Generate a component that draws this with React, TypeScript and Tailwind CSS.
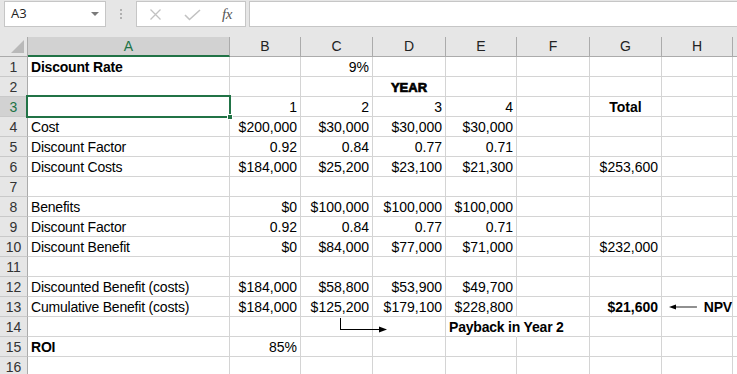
import React from "react";

type Cell = { t?: string; a?: "l" | "r" | "c"; b?: boolean; heavy?: boolean; special?: "npv" | "payArrow" | "payText" };
type ColKey = "A" | "B" | "C" | "D" | "E" | "F" | "G" | "H";

const COLS: ColKey[] = ["A", "B", "C", "D", "E", "F", "G", "H"];

const data: Record<number, Partial<Record<ColKey, Cell>>> = {
  1: { A: { t: "Discount Rate", b: true }, C: { t: "9%", a: "r" } },
  2: { D: { t: "YEAR", a: "c", heavy: true } },
  3: { B: { t: "1", a: "r" }, C: { t: "2", a: "r" }, D: { t: "3", a: "r" }, E: { t: "4", a: "r" }, G: { t: "Total", a: "c", b: true } },
  4: { A: { t: "Cost" }, B: { t: "$200,000", a: "r" }, C: { t: "$30,000", a: "r" }, D: { t: "$30,000", a: "r" }, E: { t: "$30,000", a: "r" } },
  5: { A: { t: "Discount Factor" }, B: { t: "0.92", a: "r" }, C: { t: "0.84", a: "r" }, D: { t: "0.77", a: "r" }, E: { t: "0.71", a: "r" } },
  6: { A: { t: "Discount Costs" }, B: { t: "$184,000", a: "r" }, C: { t: "$25,200", a: "r" }, D: { t: "$23,100", a: "r" }, E: { t: "$21,300", a: "r" }, G: { t: "$253,600", a: "r" } },
  7: {},
  8: { A: { t: "Benefits" }, B: { t: "$0", a: "r" }, C: { t: "$100,000", a: "r" }, D: { t: "$100,000", a: "r" }, E: { t: "$100,000", a: "r" } },
  9: { A: { t: "Discount Factor" }, B: { t: "0.92", a: "r" }, C: { t: "0.84", a: "r" }, D: { t: "0.77", a: "r" }, E: { t: "0.71", a: "r" } },
  10: { A: { t: "Discount Benefit" }, B: { t: "$0", a: "r" }, C: { t: "$84,000", a: "r" }, D: { t: "$77,000", a: "r" }, E: { t: "$71,000", a: "r" }, G: { t: "$232,000", a: "r" } },
  11: {},
  12: { A: { t: "Discounted Benefit (costs)" }, B: { t: "$184,000", a: "r" }, C: { t: "$58,800", a: "r" }, D: { t: "$53,900", a: "r" }, E: { t: "$49,700", a: "r" } },
  13: { A: { t: "Cumulative Benefit (costs)" }, B: { t: "$184,000", a: "r" }, C: { t: "$125,200", a: "r" }, D: { t: "$179,100", a: "r" }, E: { t: "$228,800", a: "r" }, G: { t: "$21,600", a: "r", b: true }, H: { special: "npv" } },
  14: { C: { special: "payArrow" }, E: { t: "Payback in Year 2", b: true, special: "payText" } },
  15: { A: { t: "ROI", b: true }, B: { t: "85%", a: "r" } },
  16: {},
};

const gridCols = "grid grid-cols-[28px_202px_71px_72px_73px_71px_73px_72px_71px_1fr]";

function DataCell({ cell, row, col }: { cell?: Cell; row: number; col: ColKey }) {
  const a = cell?.a ?? "l";
  const align =
    a === "r" ? "justify-end pr-[3px]" : a === "c" ? "justify-center" : "justify-start pl-[3px] tracking-[-0.2px]";
  const weight = cell?.b ? "font-bold" : "";
  const isSel = row === 3 && col === "A";
  const raise = cell?.special === "payArrow" || cell?.special === "payText" || isSel ? "z-10" : "";
  const borderR = cell?.special === "payText" ? "border-r-white" : "border-r-[#d4d4d4]";
  return (
    <div
      className={`relative h-[20px] pt-[2px] border-r border-b border-b-[#d4d4d4] ${borderR} bg-white flex items-center whitespace-nowrap text-[14px] text-black ${align} ${weight} ${raise}`}
    >
      {cell?.heavy ? (
        <span className="font-bold text-[13px] [-webkit-text-stroke:0.7px_black]">{cell.t}</span>
      ) : cell?.special === "npv" ? (
        <div className="flex items-center pl-[4px] w-full">
          <svg width="33" height="8" viewBox="0 0 33 8" className="-mt-[1px]">
            <polygon points="0,4 8,1 8,7" fill="#000" />
            <line x1="7" y1="4" x2="32" y2="4" stroke="#000" strokeWidth="1" />
          </svg>
          <span className="ml-[6px] font-bold">NPV</span>
        </div>
      ) : cell?.special === "payArrow" ? (
        <svg className="absolute left-[38px] top-[0px]" width="50" height="17" viewBox="0 0 50 17">
          <line x1="1.5" y1="1" x2="1.5" y2="12.5" stroke="#000" strokeWidth="1" />
          <line x1="1" y1="12.5" x2="42" y2="12.5" stroke="#000" strokeWidth="1" />
          <polygon points="40,9.5 48,12.5 40,15.5" fill="#000" />
        </svg>
      ) : (
        cell?.t
      )}
      {isSel && (
        <>
          <div className="absolute left-[-2px] top-[-2px] right-[-2px] bottom-[-2px] border-2 border-[#217346] pointer-events-none" />
          <div className="absolute right-[-4px] bottom-[-4px] w-[6px] h-[6px] bg-[#217346] border border-white" />
        </>
      )}
    </div>
  );
}

export default function App() {
  return (
    <div className="w-[737px] h-[374px] overflow-hidden bg-[#e6e6e6] font-['Liberation_Sans',Arial,sans-serif] select-none">
      {/* Formula bar */}
      <div className="flex h-[27px] pt-[1px]">
        <div className="ml-[4px] w-[102px] h-[26px] bg-white border border-[#c6c6c6] flex items-center justify-between pl-[6px] pr-[6px]">
          <span className="text-[13px] text-[#222] font-['Open_Sans','Liberation_Sans',sans-serif]">A3</span>
          <svg width="8" height="5" viewBox="0 0 8 5">
            <polygon points="0,0 8,0 4,4" fill="#7a7a7a" />
          </svg>
        </div>
        <div className="w-[30px] flex flex-col items-center justify-center gap-[2px]">
          <span className="w-[2px] h-[2px] bg-[#b0b0b0]" />
          <span className="w-[2px] h-[2px] bg-[#b0b0b0]" />
          <span className="w-[2px] h-[2px] bg-[#b0b0b0]" />
        </div>
        <div className="w-[110px] h-[26px] bg-white border border-[#c6c6c6] flex items-center">
          <svg className="ml-[12px]" width="13" height="13" viewBox="0 0 13 13">
            <path d="M1.5 1.5 L11.5 11.5 M11.5 1.5 L1.5 11.5" stroke="#c2c2c2" strokeWidth="1.3" fill="none" />
          </svg>
          <svg className="ml-[22px]" width="17" height="13" viewBox="0 0 17 13">
            <path d="M1 7 L5.5 11.5 L16 2" stroke="#c2c2c2" strokeWidth="1.6" fill="none" />
          </svg>
          <span className="ml-[21px] text-[15px] italic text-[#555] font-['Liberation_Serif',serif] leading-none tracking-[-0.5px]">fx</span>
        </div>
        <div className="ml-[3px] flex-1 h-[26px] bg-white border border-r-0 border-[#c6c6c6]" />
      </div>
      <div className="h-[10px]" />
      {/* Column headers */}
      <div className={`${gridCols} h-[20px]`}>
        <div className="relative h-[20px] border-r border-b border-[#ababab] bg-[#e6e6e6]">
          <svg className="absolute left-[11px] top-[3px]" width="14" height="14" viewBox="0 0 14 14">
            <polygon points="13,0 13,13 0,13" fill="#b9b9b9" />
          </svg>
        </div>
        {COLS.map((c) => (
          <div
            key={c}
            className={`h-[20px] border-r border-[#ababab] flex items-center justify-center text-[14px] ${
              c === "A" ? "bg-[#d2d2d2] text-[#217346] border-b-2 border-b-[#217346]" : "bg-[#e6e6e6] text-[#222] border-b border-b-[#ababab]"
            }`}
          >
            {c}
          </div>
        ))}
        <div className="h-[20px] border-b border-[#ababab] bg-[#e6e6e6]" />
      </div>
      {/* Rows */}
      {Array.from({ length: 16 }, (_, i) => i + 1).map((r) => (
        <div key={r} className={`${gridCols} h-[20px]`}>
          <div
            className={`h-[20px] pt-[2px] border-r border-r-[#ababab] border-b border-b-[#c9c9c9] flex items-center justify-center text-[14px] ${
              r === 3 ? "bg-[#d2d2d2] text-[#217346]" : "bg-[#e6e6e6] text-[#333]"
            }`}
          >
            {r}
          </div>
          {COLS.map((c) => (
            <DataCell key={c} cell={data[r][c]} row={r} col={c} />
          ))}
          <div className="h-[20px] border-b border-[#d4d4d4] bg-white" />
        </div>
      ))}
    </div>
  );
}
